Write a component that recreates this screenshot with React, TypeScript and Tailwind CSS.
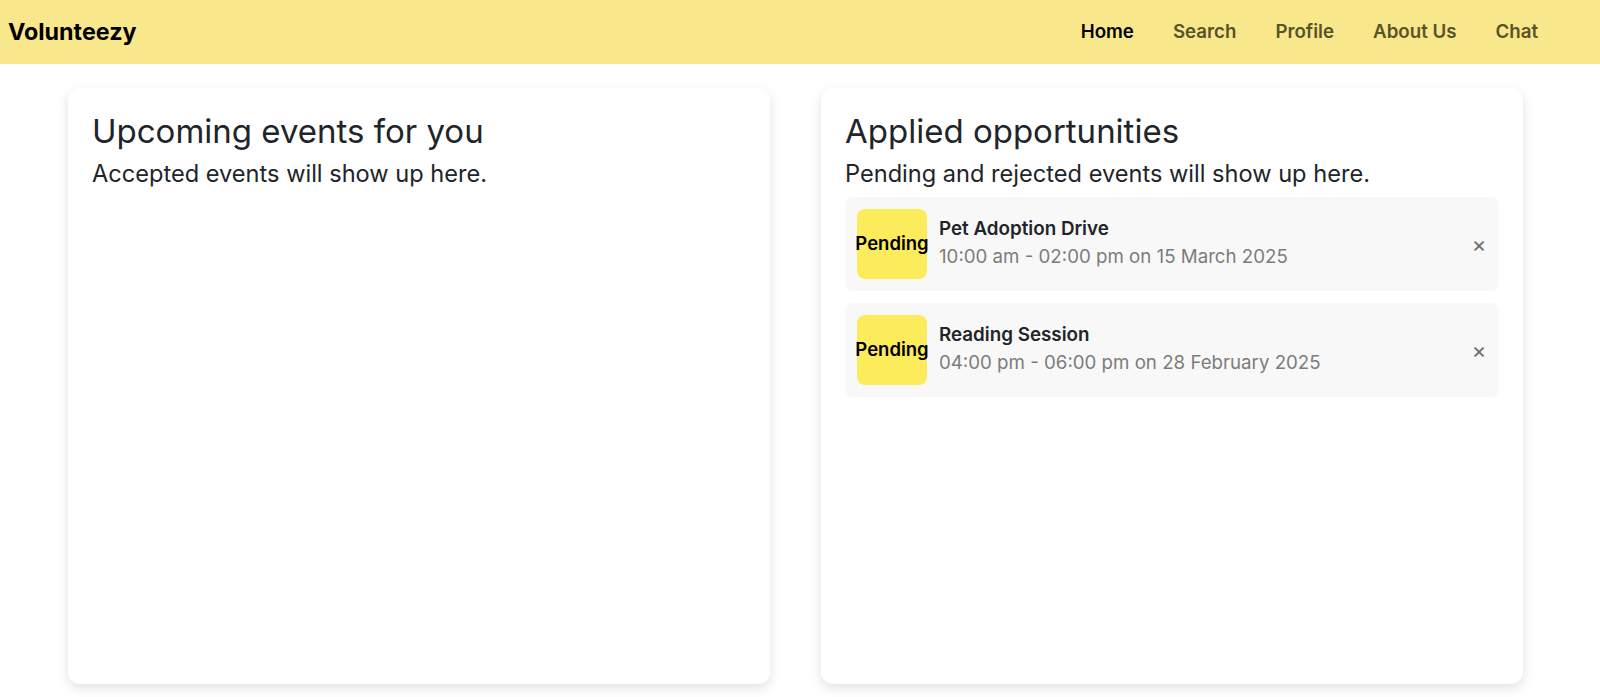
import React from 'react';

const applied = [
  { id: 1, status: 'Pending', title: 'Pet Adoption Drive', when: '10:00 am - 02:00 pm on 15 March 2025' },
  { id: 2, status: 'Pending', title: 'Reading Session', when: '04:00 pm - 06:00 pm on 28 February 2025' },
];

const links = ['Home', 'Search', 'Profile', 'About Us', 'Chat'];

export default function App() {
  return (
    <div className="min-h-screen bg-white text-[#212529] font-['Inter',sans-serif]">
      {/* Navbar */}
      <header className="h-16 bg-[#f9e88b] flex items-center justify-between pl-2 pr-[62px]">
        <span className="text-[23.3px] font-bold text-black">Volunteezy</span>
        <nav className="flex items-center gap-[39px]">
          {links.map((l, i) => (
            <a
              key={l}
              href="#"
              className={
                'text-[18.7px] font-semibold ' + (i === 0 ? 'text-black' : 'text-[#58532a]')
              }
            >
              {l}
            </a>
          ))}
        </nav>
      </header>

      {/* Cards */}
      <main className="flex gap-[51px] pl-[68px] pt-6">
        <section className="w-[702px] h-[596px] bg-white rounded-xl shadow-[0_4px_12px_rgba(0,0,0,0.12)] p-6">
          <h2 className="text-[33px] leading-[38px] mb-2 font-normal">Upcoming events for you</h2>
          <p className="text-[23.6px] leading-[31px]">Accepted events will show up here.</p>
        </section>

        <section className="w-[702px] h-[596px] bg-white rounded-xl shadow-[0_4px_12px_rgba(0,0,0,0.12)] p-6">
          <h2 className="text-[33px] leading-[38px] mb-2 font-normal">Applied opportunities</h2>
          <p className="text-[23.6px] leading-[31px] mb-2">Pending and rejected events will show up here.</p>

          <div className="flex flex-col gap-3">
            {applied.map((ev) => (
              <div key={ev.id} className="flex items-center gap-3 bg-[#f8f8f8] rounded-lg p-3">
                <div className="w-[70px] h-[70px] shrink-0 rounded-lg bg-[#fcec5c] flex items-center justify-center">
                  <span className="text-[18.5px] font-semibold text-black whitespace-nowrap">{ev.status}</span>
                </div>
                <div className="flex-1 flex flex-col">
                  <span className="text-[18.8px] font-semibold leading-[26px]">{ev.title}</span>
                  <span className="text-[18.7px] leading-[30px] text-[#7c7c7c]">{ev.when}</span>
                </div>
                <button className="w-4 text-center text-[#6c6c6c] text-[22px] leading-none">×</button>
              </div>
            ))}
          </div>
        </section>
      </main>
    </div>
  );
}
